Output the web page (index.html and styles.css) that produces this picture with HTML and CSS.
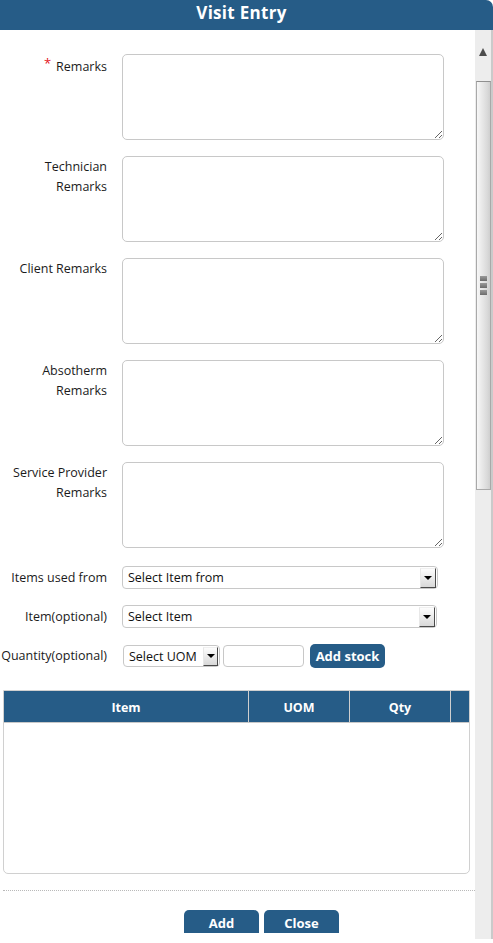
FILE: index.html
```
<!DOCTYPE html>
<html lang="en">
  <head>
    <meta charset="UTF-8" />
    <meta name="viewport" content="width=device-width, initial-scale=1.0" />
    <title>Visit Entry</title>
    <link rel="stylesheet" href="styles.css">
  </head>
  <body>
    <div class="dialog">
      <div class="title">Visit Entry</div>
      <div class="frame">
        <div class="content">
          <form class="form">
            <div class="row text-row">
              <label class="label"><span class="req">*</span>Remarks</label>
              <textarea name="remarks"></textarea>
            </div>
            <div class="row text-row">
              <label class="label">Technician Remarks</label>
              <textarea name="tech"></textarea>
            </div>
            <div class="row text-row">
              <label class="label">Client Remarks</label>
              <textarea name="client"></textarea>
            </div>
            <div class="row text-row">
              <label class="label">Absotherm Remarks</label>
              <textarea name="absotherm"></textarea>
            </div>
            <div class="row text-row">
              <label class="label">Service Provider Remarks</label>
              <textarea name="provider"></textarea>
            </div>

            <div class="row pick-row first">
              <label class="label nowrap">Items used from</label>
              <div class="select wide">
                <select name="from"><option>Select Item from</option></select>
                <span class="drop"></span>
              </div>
            </div>
            <div class="row pick-row">
              <label class="label nowrap">Item(optional)</label>
              <div class="select wide item">
                <select name="item"><option>Select Item</option></select>
                <span class="drop"></span>
              </div>
            </div>
            <div class="row pick-row qty-row">
              <label class="label nowrap">Quantity(optional)</label>
              <div class="qty">
                <div class="select uom">
                  <select name="uom"><option>Select UOM</option></select>
                  <span class="drop"></span>
                </div>
                <input class="qty-input" type="text" name="qty" />
                <button type="button" class="btn stock">Add stock</button>
              </div>
            </div>
          </form>

          <div class="grid">
            <div class="grid-head">
              <div class="cell">Item</div>
              <div class="cell">UOM</div>
              <div class="cell">Qty</div>
              <div class="cell"></div>
            </div>
            <div class="grid-body"></div>
          </div>

          <div class="sep"></div>

          <div class="actions">
            <button type="button" class="btn act">Add</button>
            <button type="button" class="btn act">Close</button>
          </div>
        </div>

        <div class="scrollbar">
          <div class="sb-arrow"><span class="tri"></span></div>
          <div class="sb-thumb">
            <span class="grip"></span>
            <span class="grip"></span>
            <span class="grip"></span>
          </div>
        </div>
      </div>
    </div>
  </body>
</html>
```

FILE: styles.css
```
* {
  padding: 0;
  margin: 0;
  box-sizing: border-box;
}
body {
  background: #fff;
  font-family: "Open Sans", "DejaVu Sans", sans-serif;
  color: #1b1b1b;
  width: 493px;
  height: 943px;
  overflow: hidden;
}
.dialog {
  width: 493px;
}
.title {
  height: 30px;
  line-height: 26px;
  background: #265c87;
  color: #fff;
  font-weight: 700;
  font-size: 17px;
  letter-spacing: 0.3px;
  text-align: center;
  padding-right: 10px;
  border-top-right-radius: 7px;
}
.frame {
  display: flex;
  align-items: flex-start;
  height: 909px;
}
.content {
  width: 475px;
  height: 904px;
  overflow: hidden;
  padding-top: 24px;
}

/* form rows */
.row {
  display: grid;
  grid-template-columns: 107px 322px;
  column-gap: 15px;
}
.label {
  font-size: 12.5px;
  line-height: 20px;
  text-align: right;
}
.text-row .label {
  margin-top: 1px;
}
.text-row:first-child .label {
  margin-top: -1px;
}
.nowrap {
  white-space: nowrap;
  display: flex;
  justify-content: flex-end;
}
.req {
  color: #e3141b;
  font-size: 13px;
  margin-right: 5px;
  vertical-align: 3px;
}
.text-row {
  margin-bottom: 16px;
}
.text-row textarea {
  width: 322px;
  height: 86px;
  border: 1px solid #c8c8c8;
  border-radius: 5px;
  outline: none;
  font-family: inherit;
  font-size: 12px;
}
.pick-row {
  align-items: center;
  margin-bottom: 16px;
}
.pick-row.first {
  margin-top: 18px;
}
.qty-row {
  margin-bottom: 0;
}

/* select boxes */
.select {
  display: flex;
  align-items: center;
  height: 23px;
  border: 1px solid #c8c8c8;
  border-radius: 4px;
  background: #fff;
  padding-right: 1px;
}
.select select {
  flex: 1;
  min-width: 0;
  appearance: none;
  -webkit-appearance: none;
  border: none;
  background: transparent;
  outline: none;
  font-family: inherit;
  font-size: 12.5px;
  color: #111;
  padding-left: 5px;
}
.wide {
  width: 316px;
}
.item {
  width: 315px;
}
.drop {
  width: 16px;
  height: 20px;
  background: linear-gradient(#fdfdfd, #d8d8d8);
  border: 1px solid;
  border-color: #f0f0f0 #4a4a4a #4a4a4a #e8e8e8;
  display: flex;
  align-items: center;
  justify-content: center;
}
.drop::after {
  content: "";
  border-left: 4px solid transparent;
  border-right: 4px solid transparent;
  border-top: 4px solid #000;
}
.qty {
  display: flex;
  align-items: center;
  height: 24px;
  margin-left: 1px;
}
.uom {
  width: 97px;
  height: 22px;
}
.uom .drop {
  height: 19px;
  width: 15px;
}
.qty-input {
  width: 81px;
  height: 22px;
  margin-left: 3px;
  border: 1px solid #c8c8c8;
  border-radius: 4px;
  outline: none;
}
.btn {
  background: #265c87;
  color: #fff;
  border: none;
  font-family: inherit;
  font-weight: 700;
  font-size: 13px;
}
.stock {
  width: 75px;
  height: 24px;
  margin-left: 6px;
  border-radius: 5px;
}

/* item grid */
.grid {
  margin: 22px 0 0 3px;
  width: 467px;
  height: 184px;
  border: 1px solid #d0d0d0;
  border-radius: 0 0 5px 5px;
  display: flex;
  flex-direction: column;
}
.grid-head {
  display: grid;
  grid-template-columns: 244px 101px 101px 1fr;
  height: 32px;
  background: #265c87;
  border-bottom: 1px solid #c8c8c8;
}
.grid-head .cell {
  color: #fff;
  font-weight: 700;
  font-size: 12.5px;
  display: flex;
  align-items: center;
  justify-content: center;
  padding-top: 2px;
}
.grid-head .cell + .cell {
  border-left: 1px solid #cfcfcf;
}
.grid-body {
  flex: 1;
}

.sep {
  margin: 16px 0 0 3px;
  border-top: 1px dotted #b9b9b9;
}
.actions {
  display: flex;
  gap: 5px;
  padding-left: 184px;
  margin-top: 19px;
}
.act {
  width: 75px;
  height: 23px;
  border-radius: 5px 5px 0 0;
  padding-top: 2px;
}

/* fake window scrollbar */
.scrollbar {
  width: 18px;
  height: 909px;
  background: #ededed;
  border-right: 2px solid #cacaca;
  display: flex;
  flex-direction: column;
  align-items: center;
}
.sb-arrow {
  height: 42px;
  width: 16px;
  display: flex;
  justify-content: center;
  padding-top: 18px;
}
.tri {
  width: 0;
  height: 0;
  border-left: 4px solid transparent;
  border-right: 4px solid transparent;
  border-bottom: 8px solid #4c4c4c;
}
.sb-thumb {
  margin-top: 9px;
  width: 15px;
  height: 409px;
  border: 1px solid #a9a9a9;
  border-top-color: #8f8f8f;
  background: linear-gradient(to right, #f7f7f7, #d9d9d9 80%, #cfcfcf);
  display: flex;
  flex-direction: column;
  align-items: center;
  justify-content: center;
  gap: 2px;
}
.grip {
  width: 7px;
  height: 5px;
  background: linear-gradient(#9a9a9a, #6c6c6c);
}
```
